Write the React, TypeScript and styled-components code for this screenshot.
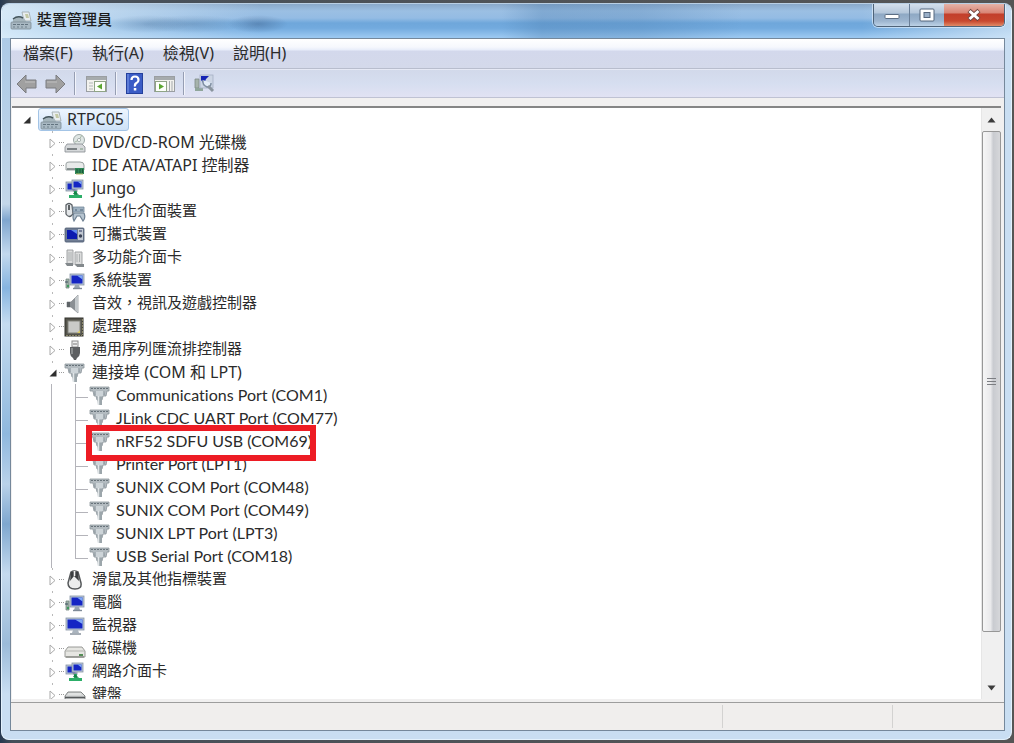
import React from "react";
import styled, { createGlobalStyle, css } from "styled-components";

const GlobalStyle = createGlobalStyle`
  * { box-sizing: border-box; }
  html, body { margin: 0; height: 100%; }
  #root { height: 100%; }
  body {
    background: #4d5763;
    color: #262626;
    font: 15px/23px "Noto Sans", "Noto Sans CJK TC", sans-serif;
    overflow: hidden;
  }
  button {
    font: inherit;
    color: inherit;
    border: 0;
    padding: 0;
    margin: 0;
    background: none;
  }
`;

const Desktop = styled.div`
  height: 100vh;
  padding: 3px 2px 3px 1px;
  background: linear-gradient(90deg, #26384f, #454f5a 12px, #4f5357 50%, #555);
`;

const Window = styled.div`
  height: 100%;
  display: flex;
  flex-direction: column;
  border: 1px solid #e3f1fc;
  border-top-color: #b9cfe4;
  border-radius: 8px;
  padding: 0 6px 8px 8px;
  background:
    linear-gradient(180deg, transparent 98%, #c9def2 99%),
    linear-gradient(180deg, #a9c8e6 0, #c3d7ea 200px, #7fa6cf 216px, #c3d9ee 250px, #86b4e0 284px, #c6dcf0 320px, #8fb8de 430px, #b9d2ea 480px, #7ea7cf 520px, #c5daee 570px, #9bbbd9 640px, #c9def2 690px) left / 9px 100% no-repeat,
    #c9def2;
  overflow: hidden;
`;

const TitleBar = styled.header`
  flex: none;
  height: 34px;
  margin: 0 -6px 0 -8px;
  padding: 0 6px 0 8px;
  display: flex;
  align-items: flex-start;
  background:
    radial-gradient(ellipse 42px 9px at 146px 20px, rgba(70, 105, 145, 0.3), transparent),
    radial-gradient(ellipse 52px 9px at 190px 20px, rgba(70, 105, 145, 0.3), transparent),
    radial-gradient(ellipse 30px 9px at 256px 20px, rgba(60, 90, 130, 0.4), transparent),
    linear-gradient(90deg, rgba(225, 240, 250, 0.85), rgba(215, 233, 247, 0.55) 110px, transparent 260px, transparent 500px, rgba(70, 120, 170, 0.3) 540px, rgba(70, 120, 170, 0.25) 640px, transparent 740px, transparent 860px, rgba(220, 235, 248, 0.7)),
    linear-gradient(180deg, #8aa9c9 0, #9bbfe3 7px, #94bce4 14px, #6fa7db 19px, #72aade 24px, #9ac7f0 33px);
`;

const Title = styled.h1`
  flex: 1;
  margin: 4px 0 0 5px;
  font-size: 15px;
  line-height: 23px;
  font-weight: 500;
  color: #1c1c1c;
`;

const TitleIcon = styled.span`
  display: flex;
  margin-top: 6px;
`;

const Caption = styled.div`
  display: flex;
  height: 23px;
  border: 1px solid #4f6378;
  border-top: 0;
  border-radius: 0 0 5px 5px;
  overflow: hidden;
  box-shadow: 0 0 0 1px rgba(235, 245, 255, 0.6);
`;

const CaptionButton = styled.button<{ $danger?: boolean }>`
  width: ${(p) => (p.$danger ? 60 : 35)}px;
  display: flex;
  align-items: center;
  justify-content: center;
  border-left: ${(p) => (p.$danger ? 0 : 1)}px solid #6a7f98;
  background: ${(p) =>
    p.$danger
      ? "linear-gradient(180deg, #e5b3a8, #d98474 9px, #c23f2b 10px, #c8482f 17px, #e08a66)"
      : "linear-gradient(180deg, #d3dfec, #b4c6da 9px, #8ea8c4 10px, #9db5cf 17px, #bdd2e6)"};
  &:first-child { border-left: 0; }
`;

const Client = styled.main`
  flex: 1;
  min-height: 0;
  display: flex;
  flex-direction: column;
  border: 1px solid #75889b;
  background: #f1f0f0;
  color: #2b2b2b;
`;

const MenuBar = styled.nav`
  flex: none;
  height: 30px;
  display: flex;
  align-items: center;
  gap: 19px;
  padding: 0 12px;
  border-bottom: 1px solid #b8bdcd;
  background: linear-gradient(180deg, #fff 0, #f6f8fd 8px, #e8edfa 11px, #d3d8ec 12px, #d4d9ea 100%);
`;

const MenuItem = styled.button`
  font-size: 16px;
  white-space: nowrap;
`;

const Toolbar = styled.div`
  flex: none;
  height: 29px;
  display: flex;
  align-items: center;
  padding: 0 5px;
  border-top: 1px solid #e6e9f5;
  border-bottom: 1px solid #bfc2d3;
  background: linear-gradient(180deg, #d2d9ea, #d6def0 50%, #e1e2f3);
`;

const ToolButton = styled.button<{ $gap?: number }>`
  display: flex;
  margin-right: ${(p) => p.$gap ?? 8}px;
`;

const Separator = styled.span<{ $gap?: number }>`
  width: 2px;
  height: 23px;
  margin-right: ${(p) => p.$gap ?? 9}px;
  background: linear-gradient(90deg, #969eb3 50%, #f2f4fb 50%);
`;

const Pane = styled.section`
  flex: 1;
  min-height: 0;
  display: flex;
  margin: 8px 3px 3px 1px;
  border-top: 2px solid #858585;
  background: #fff;
`;

const TreeArea = styled.div`
  flex: 1;
  min-width: 0;
  overflow: hidden;
`;

const List = styled.ul`
  list-style: none;
  margin: 0;
  padding: 0;
`;

const Row = styled.div`
  position: relative;
  display: flex;
  align-items: center;
  height: 23px;
  white-space: nowrap;
`;

const RootRow = styled(Row)`
  padding-left: 10px;
`;

const RootLabel = styled.button`
  display: flex;
  align-items: center;
  height: 23px;
  padding: 0 4px 0 1px;
  margin-left: 6px;
  gap: 5px;
  font-size: 16px;
  line-height: 21px;
  border: 1px solid #a3c4e6;
  border-radius: 3px;
  background: linear-gradient(180deg, #eef6fe, #cde1f7);
`;

const dotted = css`
  background: linear-gradient(180deg, #b9b9b9 2px, transparent 2px) 18px 0 / 1px 23px no-repeat;
`;

const Gutter = styled.span<{ $line: "dots" | "solid" }>`
  flex: none;
  width: 30px;
  height: 23px;
  margin-left: 22px;
  padding-left: 14px;
  display: flex;
  align-items: center;
  ${(p) =>
    p.$line === "dots"
      ? dotted
      : css`background: linear-gradient(#b4b4ba, #b4b4ba) 17px 0 / 1px 100% no-repeat;`}
`;

const Expander = styled.button`
  display: flex;
  width: 10px;
`;

const Stub = styled.span`
  width: 5px;
  height: 1px;
  margin-left: 1px;
  background: repeating-linear-gradient(90deg, #9c9c9c 0 1px, transparent 1px 2px);
`;

const Branch = styled.span<{ $last?: boolean }>`
  flex: none;
  width: 25px;
  height: 23px;
  background:
    linear-gradient(#b4b4ba, #b4b4ba) 11px 0 / 1px ${(p) => (p.$last ? "13px" : "100%")} no-repeat,
    linear-gradient(#b4b4ba, #b4b4ba) 11px 13px / 13px 1px no-repeat;
`;

const IconBox = styled.span`
  flex: none;
  display: flex;
  width: 22px;
`;

const Label = styled.button<{ $latin?: boolean }>`
  padding: 0 0 ${(p) => (p.$latin ? 1 : 2)}px 6px;
  font-size: ${(p) => (p.$latin ? 16 : 15)}px;
  line-height: 21px;
  text-align: left;
`;

const LeafLabel = styled(Label)`
  padding: 0 0 2px 5px;
  font-family: Lato, "Noto Sans", sans-serif;
  font-variant-ligatures: none;
`;

const Highlight = styled.span`
  position: absolute;
  z-index: 1;
  left: 74px;
  top: -5px;
  width: 230px;
  height: 36px;
  border: 6px solid #ed1c24;
  pointer-events: none;
`;

const ScrollBar = styled.div`
  flex: none;
  width: 20px;
  display: flex;
  flex-direction: column;
  background: #f0f0f0;
  border-left: 1px solid #e6e6e6;
`;

const ScrollButton = styled.button`
  flex: none;
  height: 23px;
  display: flex;
  align-items: center;
  justify-content: center;
`;

const Track = styled.div`
  flex: 1;
  display: flex;
  flex-direction: column;
`;

const Thumb = styled.div`
  height: 92%;
  display: flex;
  align-items: center;
  justify-content: center;
  border: 1px solid #979797;
  border-radius: 2px;
  background: linear-gradient(90deg, #f6f6f6, #e9e9eb 45%, #c9cbd0 60%, #d6d7da);
`;

const StatusBar = styled.footer`
  flex: none;
  height: 28px;
  display: grid;
  grid-template-columns: 1fr 170px 111px;
  border-top: 1px solid #9d9d9d;
  background: #f0eeed;
`;

const StatusCell = styled.span`
  margin: 2px 0;
  border-right: 1px solid #d3d2d1;
  &:last-child { border-right: 0; }
`;

type IconName =
  | "computerRoot" | "disc" | "ide" | "network" | "hid" | "portable" | "card" | "pc"
  | "sound" | "cpu" | "usb" | "port" | "mouse" | "monitor" | "disk" | "keyboard";

const Screen = ({ x, y, w, h }: { x: number; y: number; w: number; h: number }) => (
  <g>
    <rect x={x} y={y} width={w} height={h} fill="#b9c6d6" stroke="#8794a6" strokeWidth="0.8" />
    <rect x={x + 1.5} y={y + 1.5} width={w - 3} height={h - 3} fill="#1526c4" />
    <path d={`M${x + w / 2} ${y + 1.5}H${x + w - 1.5}V${y + h / 2}Z`} fill="#7fa8f4" />
  </g>
);

const shapes: Record<IconName, React.ReactNode> = {
  computerRoot: (
    <>
      <path d="M12 2h7l2 9h-7z" fill="#e9eef0" stroke="#9aa5a8" strokeWidth="0.8" />
      <path d="M15 4h3l1 4h-3z" fill="#c3c9a6" />
      <path d="M3 9q5-5 11-1l3 5H3z" fill="#a5b5bc" />
      <path d="M3 9q5-4 10-1" stroke="#45565c" strokeWidth="1.500" fill="none" />
      <rect x="1" y="12" width="20" height="7" rx="1" fill="#a8b8c2" stroke="#7b8a94" strokeWidth="0.8" />
      <path d="M3 14.500h16" stroke="#62737f" strokeDasharray="3 1" />
      <path d="M3 17h16" stroke="#71828e" strokeDasharray="2 2" />
    </>
  ),
  disc: (
    <>
      <circle cx="15" cy="7" r="5.5" fill="#dfe6e4" stroke="#9ea9a8" />
      <path d="M15 7l3-5M15 7l-4 2" stroke="#a8b9a6" />
      <circle cx="15" cy="7" r="1.6" fill="#fff" stroke="#8e9998" strokeWidth="0.7" />
      <path d="M3 11h15l3 3v5H1v-5z" fill="#d5d8da" stroke="#868c8f" strokeWidth="0.8" />
      <path d="M3 16h10" stroke="#5d6467" strokeWidth="1.4" /><path d="M16 16h3" stroke="#7d9a82" />
    </>
  ),
  ide: (
    <>
      <path d="M2 8q0-2 3-2h11q4 0 4 3v5H2z" fill="#e8eaea" stroke="#8f9797" strokeWidth="0.9" />
      <path d="M3 13h10" stroke="#6d7777" strokeWidth="1.6" />
      <path d="M11 12h9v6h-9z" fill="#2d8656" /><path d="M13 13v4M16 13v4M18.5 13v4" stroke="#1c5638" />
      <path d="M12 18h7" stroke="#b5b464" />
    </>
  ),
  network: (
    <>
      <Screen x={2} y={3} w={11} h={9} />
      <Screen x={8} y={1} w={11} h={9} />
      <path d="M9 11l4 2" stroke="#7e8e9e" strokeWidth="2" />
      <path d="M10 12h3v4h5v3H5v-3h5z" fill="#2cae68" /><path d="M9 15l2-3 4 4z" fill="#188048" />
    </>
  ),
  hid: (
    <>
      <path d="M2 3q3-3 6 0l1 9q-4 5-7 0z" fill="#e4e7e9" stroke="#5b6166" strokeWidth="1.300" />
      <path d="M5 3v5" stroke="#2f3336" strokeWidth="1.5" />
      <path d="M9 5h11v5H9z" fill="#9fb2c2" stroke="#75889a" strokeWidth="0.8" />
      <path d="M10 11q-2 4 0 8l3-5h3l3 5q3-3 1-8z" fill="#b6c4d0" stroke="#6f8192" strokeWidth="1.200" />
      <path d="M11 8h2M16 8h3" stroke="#4f6377" />
    </>
  ),
  portable: (
    <>
      <rect x="1" y="3" width="19" height="14" rx="1" fill="#6f7d94" stroke="#4f5a70" strokeWidth="0.8" />
      <rect x="3" y="5" width="10" height="9" fill="#0c1bb0" /><path d="M7 5h6v4z" fill="#6189ee" />
      <rect x="14" y="4" width="5" height="11" fill="#c1c8d2" />
      <circle cx="16.5" cy="11" r="1.7" fill="#3b4256" /><path d="M15 6h3" stroke="#2a3560" />
      <path d="M2 17.5h17" stroke="#aeb6c2" />
    </>
  ),
  card: (
    <>
      <path d="M3 2h6v15H3zM11 4h7v13h-7z" fill="#dcdddd" stroke="#989c9e" strokeWidth="0.9" />
      <path d="M5 4v9M7 4v9M13 6v8M15.500 6v8" stroke="#aeb2b3" />
      <path d="M1 15h8v3H3zM11 16h9v3h-7z" fill="#83898c" />
    </>
  ),
  pc: (
    <>
      <Screen x={6} y={3} w={14} h={11} />
      <path d="M11 14h4l1 3h-6z" fill="#9aa7b4" /><path d="M9 17.500h9" stroke="#7f8b98" strokeWidth="1.4" />
      <path d="M2 8h3v9H2z" fill="#9db0a8" stroke="#74877f" strokeWidth="0.8" /><path d="M1 11h3" stroke="#3a4c5e" />
      <circle cx="4" cy="15" r="1.200" fill="#3d9a5c" />
    </>
  ),
  sound: (
    <>
      <path d="M3 8h4l7-7v18l-7-6H3z" fill="#8b9094" stroke="#74797d" strokeWidth="0.6" />
      <path d="M11 4l3-3v18l-3-3z" fill="#c3c8cb" /><path d="M3 8h3v5H3z" fill="#5e6367" />
    </>
  ),
  cpu: (
    <>
      <rect x="1" y="1" width="18" height="18" fill="#55544c" stroke="#33322c" />
      <rect x="4" y="4" width="12" height="12" fill="#c9cac8" stroke="#85867f" />
      <path d="M13 16l3-3v3z" fill="#d8c764" />
      <path d="M2 18.500h16M18.500 2v16" stroke="#8a8768" strokeDasharray="2 1" />
    </>
  ),
  usb: (
    <>
      <rect x="8" y="1" width="6" height="6" fill="#f0f0f0" stroke="#8d8d8d" /><path d="M10 3v2M12 3v2" stroke="#777" />
      <path d="M6 7h10v6q0 3-3 5l-1 2h-2l-1-2q-3-2-3-5z" fill="#5d5f61" /><path d="M8 8v6" stroke="#989b9d" strokeWidth="1.5" />
    </>
  ),
  port: (
    <>
      <path d="M1 1h19v4h-2l-1 5h-3l-1 4H8l-1-4H5L4 5H1z" fill="#b3bbc0" stroke="#8b949a" strokeWidth="0.8" />
      <path d="M2 2.500h17" stroke="#68737a" strokeDasharray="2 1" />
      <path d="M5 5h11l-2 5H7z" fill="#cdd4d8" />
      <path d="M6 5v4M15 5v4" stroke="#818c93" />
      <path d="M8 11h5v8H9z" fill="#9ca6ab" /><path d="M9.500 10v9" stroke="#e2e6e8" strokeWidth="1.500" />
    </>
  ),
  mouse: (
    <>
      <path d="M7 2q3-2 7 0l3 11q1 6-6 6t-7-6z" fill="#eceded" stroke="#55585a" strokeWidth="1.500" />
      <path d="M7 2l-1 9 4-5 5 5-1-9z" fill="#3c3f41" /><path d="M10.500 1v5" stroke="#f5f5f5" strokeWidth="1.600" />
    </>
  ),
  monitor: (
    <>
      <Screen x={2} y={2} w={18} h={12} />
      <path d="M9 14h5l1 3H8z" fill="#aab4be" /><path d="M6 18h11" stroke="#87929d" strokeWidth="1.500" />
    </>
  ),
  disk: (
    <>
      <path d="M4 8h14l3 4v6H1v-6z" fill="#e6e6e2" stroke="#8f908c" strokeWidth="0.9" />
      <path d="M1 12h20" stroke="#b4b5b0" /><path d="M15 16h4" stroke="#568d57" strokeWidth="2" />
      <path d="M2 18h18" stroke="#73746f" />
    </>
  ),
  keyboard: (
    <>
      <path d="M4 7h13l4 4v4H1v-4z" fill="#d5d7d7" stroke="#767a7b" strokeWidth="0.9" />
      <path d="M4 9h13" stroke="#eceeee" /><path d="M1 12.500h20" stroke="#56595b" strokeWidth="1.600" />
    </>
  ),
};

const Icon = ({ name }: { name: IconName }) => (
  <svg width="22" height="20" viewBox="0 0 22 20" aria-hidden="true">{shapes[name]}</svg>
);

const Arrow = ({ open }: { open?: boolean }) => (
  <svg width="10" height="12" viewBox="0 0 10 12" aria-hidden="true">
    {open ? (
      <path d="M8.500 2.500v7H1.500z" fill="#2f2f2f" />
    ) : (
      <path d="M2 2l5 4.500L2 11z" fill="#fff" stroke="#a9a9a9" />
    )}
  </svg>
);

const PaneIcon = ({ right }: { right?: boolean }) => (
  <svg width="21" height="18" viewBox="0 0 21 18" aria-hidden="true">
    <rect x="0.500" y="1.500" width="20" height="15" fill="#f2f2ee" stroke="#9a9ea2" />
    <rect x="1" y="2" width="19" height="3" fill="#a6abad" />
    {right ? (
      <>
        <rect x="1.500" y="6.500" width="11" height="10" fill="#fdfffb" stroke="#8fa486" />
        <path d="M5 8.500l5 3-5 3z" fill="#5ba630" />
        <path d="M15.500 6v10M18 6v10" stroke="#a5a9ac" />
      </>
    ) : (
      <>
        <rect x="8.500" y="6.500" width="11" height="10" fill="#fdfffb" stroke="#8fa486" />
        <path d="M16 8.500l-5 3 5 3z" fill="#5ba630" />
        <path d="M3 8h4M3 11h4M3 14h4" stroke="#b3b7b8" />
      </>
    )}
  </svg>
);

const NavArrow = ({ forward }: { forward?: boolean }) => (
  <svg width="21" height="20" viewBox="0 0 21 20" aria-hidden="true">
    <path
      d={forward ? "M20 10L11 1v5H1v8h10v5z" : "M1 10l9-9v5h10v8H10v5z"}
      fill="#a0a0a0" stroke="#7b7c80" strokeLinejoin="round"
    />
    <path d={forward ? "M2 8h10" : "M9 8h10"} stroke="#c0c0c0" />
  </svg>
);

const HelpIcon = () => (
  <svg width="18" height="21" viewBox="0 0 18 21" aria-hidden="true">
    <rect x="0.500" y="0.500" width="16" height="20" fill="#3a5cc6" stroke="#24409c" />
    <path d="M2 1v19" stroke="#7f9be8" />
    <path d="M5.500 7q0-3.500 3.500-3.500T12.500 7q0 2-2 3t-1.500 3.500" fill="none" stroke="#fff" strokeWidth="2.200" />
    <rect x="7.800" y="15" width="2.500" height="2.500" fill="#fff" />
  </svg>
);

const ScanIcon = () => (
  <svg width="22" height="20" viewBox="0 0 22 20" aria-hidden="true">
    <path d="M1 5h4v9H1z" fill="#a6b3ac" stroke="#7d8b86" strokeWidth="0.800" />
    <path d="M1 14h8v3H1z" fill="#8fa59a" />
    <rect x="6" y="1" width="13" height="13" fill="#ccd5e4" stroke="#a5b0c4" strokeWidth="0.800" />
    <path d="M7 2h8l-3 3-2 5-3-4z" fill="#1524b4" />
    <path d="M9 6q-1 5 4 7 4 0 4-4" fill="#e2ecf7" stroke="#8090a4" strokeWidth="1.500" />
    <path d="M14 12l5 5" stroke="#8a949e" strokeWidth="3" />
  </svg>
);

interface CategoryData {
  icon: IconName;
  label: string;
  latin?: boolean;
}

const categories: CategoryData[] = [
  { icon: "disc", label: "DVD/CD-ROM 光碟機", latin: true },
  { icon: "ide", label: "IDE ATA/ATAPI 控制器", latin: true },
  { icon: "network", label: "Jungo", latin: true },
  { icon: "hid", label: "人性化介面裝置" },
  { icon: "portable", label: "可攜式裝置" },
  { icon: "card", label: "多功能介面卡" },
  { icon: "pc", label: "系統裝置" },
  { icon: "sound", label: "音效，視訊及遊戲控制器" },
  { icon: "cpu", label: "處理器" },
  { icon: "usb", label: "通用序列匯流排控制器" },
];

const ports = [
  "Communications Port (COM1)",
  "JLink CDC UART Port (COM77)",
  "nRF52 SDFU USB (COM69)",
  "Printer Port (LPT1)",
  "SUNIX COM Port (COM48)",
  "SUNIX COM Port (COM49)",
  "SUNIX LPT Port (LPT3)",
  "USB Serial Port (COM18)",
];

const moreCategories: CategoryData[] = [
  { icon: "mouse", label: "滑鼠及其他指標裝置" },
  { icon: "pc", label: "電腦" },
  { icon: "monitor", label: "監視器" },
  { icon: "disk", label: "磁碟機" },
  { icon: "network", label: "網路介面卡" },
  { icon: "keyboard", label: "鍵盤" },
];

const Category = ({ icon, label, latin, open, children }: CategoryData & {
  open?: boolean; children?: React.ReactNode;
}) => (
  <li role="treeitem" aria-expanded={!!open} aria-label={label}>
    <Row>
      <Gutter $line="dots">
        <Expander aria-label={(open ? "收合 " : "展開 ") + label}><Arrow open={open} /></Expander>
        <Stub />
      </Gutter>
      <IconBox><Icon name={icon} /></IconBox>
      <Label $latin={latin}>{label}</Label>
    </Row>
    {children}
  </li>
);

export default function App() {
  return (
    <>
      <GlobalStyle />
      <Desktop>
        <Window>
          <TitleBar>
            <TitleIcon><Icon name="computerRoot" /></TitleIcon>
            <Title>裝置管理員</Title>
            <Caption>
              <CaptionButton aria-label="最小化">
                <svg width="16" height="8" viewBox="0 0 16 8"><rect x="1" y="3.500" width="14" height="4" rx="1" fill="#fff" stroke="#5c6e84" /></svg>
              </CaptionButton>
              <CaptionButton aria-label="最大化">
                <svg width="16" height="14" viewBox="0 0 16 14">
                  <rect x="1" y="1" width="14" height="12" rx="1" fill="#fff" stroke="#55667c" />
                  <rect x="5" y="4.500" width="6" height="5" fill="#9bb0c8" stroke="#55667c" />
                </svg>
              </CaptionButton>
              <CaptionButton $danger aria-label="關閉">
                <svg width="16" height="14" viewBox="0 0 16 14">
                  <path d="M3 2.500l10 9M13 2.500l-10 9" stroke="#6d4540" strokeWidth="4.500" />
                  <path d="M3.500 3l9 8M12.500 3l-9 8" stroke="#fff" strokeWidth="3" />
                </svg>
              </CaptionButton>
            </Caption>
          </TitleBar>
          <Client>
            <MenuBar>
              <MenuItem>檔案(F)</MenuItem>
              <MenuItem>執行(A)</MenuItem>
              <MenuItem>檢視(V)</MenuItem>
              <MenuItem>說明(H)</MenuItem>
            </MenuBar>
            <Toolbar>
              <ToolButton aria-label="上一頁"><NavArrow /></ToolButton>
              <ToolButton aria-label="下一頁"><NavArrow forward /></ToolButton>
              <Separator $gap={10} />
              <ToolButton aria-label="顯示/隱藏主控台樹狀目錄"><PaneIcon /></ToolButton>
              <Separator $gap={9} />
              <ToolButton aria-label="說明" $gap={10}><HelpIcon /></ToolButton>
              <ToolButton aria-label="顯示/隱藏動作窗格"><PaneIcon right /></ToolButton>
              <Separator />
              <ToolButton aria-label="掃描硬體變更"><ScanIcon /></ToolButton>
            </Toolbar>
            <Pane>
              <TreeArea>
                <List role="tree" aria-label="裝置">
                  <li role="treeitem" aria-expanded="true" aria-label="RTPC05">
                    <RootRow>
                      <Expander aria-label="收合 RTPC05"><Arrow open /></Expander>
                      <RootLabel><Icon name="computerRoot" />RTPC05</RootLabel>
                    </RootRow>
                    <List role="group">
                      {categories.map((c) => <Category key={c.label} {...c} />)}
                      <Category icon="port" label="連接埠 (COM 和 LPT)" latin open>
                        <List role="group">
                          {ports.map((label, i) => (
                            <li key={label} role="treeitem" aria-label={label}>
                              <Row>
                                <Gutter $line="solid" />
                                <Branch $last={i === ports.length - 1} />
                                <IconBox><Icon name="port" /></IconBox>
                                <LeafLabel $latin>{label}</LeafLabel>
                                {label.startsWith("nRF52") && <Highlight />}
                              </Row>
                            </li>
                          ))}
                        </List>
                      </Category>
                      {moreCategories.map((c) => <Category key={c.label} {...c} />)}
                    </List>
                  </li>
                </List>
              </TreeArea>
              <ScrollBar>
                <ScrollButton aria-label="向上捲動">
                  <svg width="9" height="6" viewBox="0 0 9 6"><path d="M4.500 0.500L8.500 5.500h-8z" fill="#3c3c3c" /></svg>
                </ScrollButton>
                <Track>
                  <Thumb>
                    <svg width="9" height="10" viewBox="0 0 9 10"><path d="M0 1.500h9M0 4.500h9M0 7.500h9" stroke="#7c7e82" /></svg>
                  </Thumb>
                </Track>
                <ScrollButton aria-label="向下捲動">
                  <svg width="9" height="6" viewBox="0 0 9 6"><path d="M4.500 5.500L8.500 0.500h-8z" fill="#3c3c3c" /></svg>
                </ScrollButton>
              </ScrollBar>
            </Pane>
            <StatusBar><StatusCell /><StatusCell /><StatusCell /></StatusBar>
          </Client>
        </Window>
      </Desktop>
    </>
  );
}
